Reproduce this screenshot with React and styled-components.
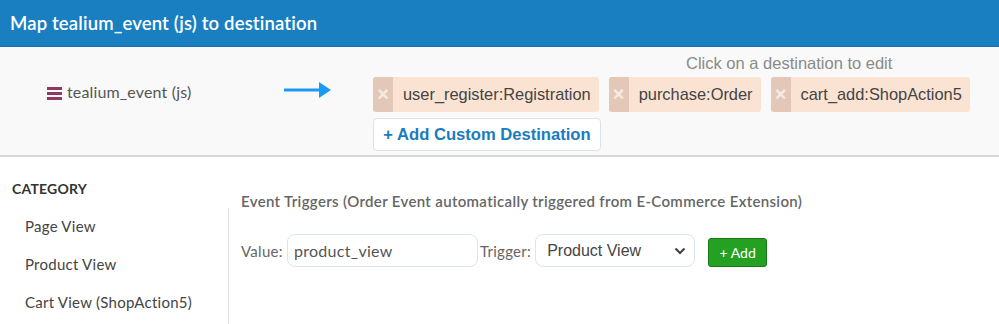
import React from 'react';
import styled, { createGlobalStyle } from 'styled-components';

const GlobalStyle = createGlobalStyle`
  html, body {
    margin: 0;
    padding: 0;
    background: #ffffff;
  }
  body {
    font-family: Lato, "Open Sans", sans-serif;
  }
`;

const Page = styled.div`
  width: 999px;
  height: 324px;
  overflow: hidden;
  background: #fff;
`;

const Header = styled.header`
  height: 46px;
  background: #1a7fc1;
  border-bottom: 1px solid #1570ad;
  display: flex;
  align-items: center;
  padding: 0 10px;
  color: #fff;
  font-size: 18.5px;
  font-weight: 600;
  letter-spacing: 0.15px;
`;

const MapPanel = styled.section`
  height: 108px;
  background: #f9f9f9;
  border-bottom: 2px solid #d7d7d7;
  display: flex;
`;

const Source = styled.div`
  width: 284px;
  display: flex;
  align-items: flex-start;
  padding: 35px 0 0 47px;
  box-sizing: border-box;
  gap: 5px;
  color: #555;
  font-size: 16px;
  letter-spacing: 0.15px;
`;

const Arrow = styled.div`
  width: 89px;
  padding-top: 35px;
`;

const Destinations = styled.div`
  display: flex;
  flex-direction: column;
  padding-top: 7px;
`;

const Hint = styled.div`
  color: #8a8a8a;
  font-family: "Liberation Sans", Arial, sans-serif;
  font-size: 16.5px;
  height: 23px;
  line-height: 18px;
  padding-left: 313px;
`;

const ChipRow = styled.div`
  display: flex;
  gap: 10px;
`;

const Chip = styled.div`
  display: flex;
  height: 35px;
  background: #fbe3d3;
  border-radius: 3px;
  overflow: hidden;
  font-family: "Liberation Sans", Arial, sans-serif;
  font-size: 16.4px;
  color: #444;
`;

const ChipX = styled.span`
  width: 20px;
  background: #e3c8b8;
  display: flex;
  align-items: center;
  justify-content: center;
  color: #f5ebe5;
  font-size: 20px;
  font-weight: bold;
`;

const ChipLabel = styled.span`
  display: flex;
  align-items: center;
  padding: 0 8px 0 10px;
`;

const AddCustom = styled.button`
  margin-top: 6px;
  align-self: flex-start;
  width: 228px;
  height: 33px;
  background: #fff;
  border: 1px solid #dbe3ea;
  border-radius: 4px;
  color: #1a7bbf;
  font-family: "Liberation Sans", Arial, sans-serif;
  font-weight: bold;
  font-size: 16.6px;
  padding: 0;
  text-align: center;
`;

const Body = styled.div`
  display: flex;
`;

const Sidebar = styled.aside`
  width: 228px;
  padding-top: 24px;
`;

const SideTitle = styled.div`
  padding-left: 12px;
  font-size: 14px;
  font-weight: 700;
  color: #333;
  letter-spacing: 0.2px;
  height: 32px;
  line-height: 16px;
`;

const SideItem = styled.div`
  padding-left: 25px;
  height: 38px;
  line-height: 26px;
  font-size: 15px;
  letter-spacing: 0.25px;
  color: #444;
`;

const Main = styled.main`
  flex: 1;
  border-left: 1px solid #e2e2e2;
  margin-top: 51px;
  padding-left: 12px;
`;

const Section = styled.div`
  margin-top: -16px;
  color: #666;
  font-size: 15px;
  font-weight: 600;
  letter-spacing: 0.34px;
`;

const TriggerRow = styled.div`
  display: flex;
  align-items: center;
  margin-top: 24px;
  color: #666;
  font-size: 15px;
  letter-spacing: 0.3px;
`;

const Label = styled.span`
  margin-right: ${p => p.gap || 4}px;
`;

const TextInput = styled.div`
  width: 191px;
  height: 33px;
  box-sizing: border-box;
  border: 1px solid #dde4ec;
  border-radius: 8px;
  background: #fff;
  display: flex;
  align-items: center;
  padding-left: 6px;
  color: #555;
  font-size: 16px;
  margin-right: 2px;
`;

const Select = styled.div`
  width: 160px;
  height: 33px;
  box-sizing: border-box;
  border: 1px solid #dde4ec;
  border-radius: 8px;
  background: #fff;
  display: flex;
  align-items: center;
  justify-content: space-between;
  padding: 0 8px 0 11px;
  color: #444;
  font-family: "Liberation Sans", Arial, sans-serif;
  font-size: 16px;
  letter-spacing: 0;
  margin-right: 13px;
`;

const GreenButton = styled.button`
  height: 29px;
  width: 59px;
  margin-top: 4px;
  background: #24a023;
  border: 1px solid #187a17;
  border-radius: 3px;
  color: #fff;
  font-family: Lato, sans-serif;
  font-size: 14px;
  padding: 0;
`;

const chips = ['user_register:Registration', 'purchase:Order', 'cart_add:ShopAction5'];
const categories = ['Page View', 'Product View', 'Cart View (ShopAction5)'];

export default function App() {
  return (
    <Page>
      <GlobalStyle />
      <Header>Map tealium_event (js) to destination</Header>
      <MapPanel>
        <Source>
          <svg width="15" height="13" viewBox="0 0 15 13" style={{ marginTop: 5 }}>
            <rect x="0" y="0" width="15" height="3" fill="#8e3a63" />
            <rect x="0" y="5" width="15" height="3" fill="#8e3a63" />
            <rect x="0" y="10" width="15" height="3" fill="#8e3a63" />
          </svg>
          <span>tealium_event (js)</span>
        </Source>
        <Arrow>
          <svg width="47" height="16" viewBox="0 0 47 16">
            <rect x="0" y="6.5" width="36" height="3" fill="#1a9af0" />
            <polygon points="35,0 47,8 35,16" fill="#1a9af0" />
          </svg>
        </Arrow>
        <Destinations>
          <Hint>Click on a destination to edit</Hint>
          <ChipRow>
            {chips.map(c => (
              <Chip key={c}>
                <ChipX>×</ChipX>
                <ChipLabel>{c}</ChipLabel>
              </Chip>
            ))}
          </ChipRow>
          <AddCustom>+ Add Custom Destination</AddCustom>
        </Destinations>
      </MapPanel>
      <Body>
        <Sidebar>
          <SideTitle>CATEGORY</SideTitle>
          {categories.map(c => (
            <SideItem key={c}>{c}</SideItem>
          ))}
        </Sidebar>
        <Main>
          <Section>Event Triggers (Order Event automatically triggered from E-Commerce Extension)</Section>
          <TriggerRow>
            <Label gap={4}>Value:</Label>
            <TextInput>product_view</TextInput>
            <Label gap={4}>Trigger:</Label>
            <Select>
              <span>Product View</span>
              <svg width="12" height="8" viewBox="0 0 12 8">
                <path d="M1.5 1.5 L6 6 L10.5 1.5" fill="none" stroke="#444" strokeWidth="2.2" />
              </svg>
            </Select>
            <GreenButton>+ Add</GreenButton>
          </TriggerRow>
        </Main>
      </Body>
    </Page>
  );
}
